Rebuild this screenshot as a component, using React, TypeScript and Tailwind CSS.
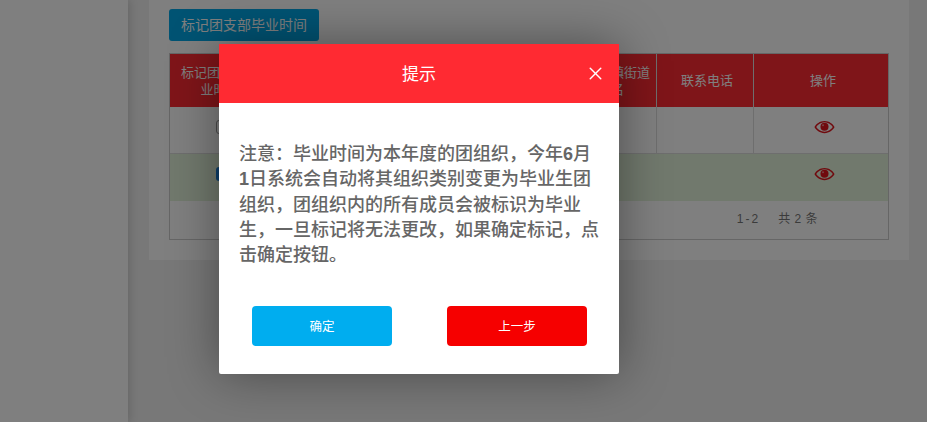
import { X } from 'lucide-react'

const font = { fontFamily: '"Liberation Sans", "Noto Sans CJK SC", sans-serif' }

const EyeIcon = () => (
    <svg viewBox="0 0 24 16" className="h-[14px] w-[21px] text-[#e0141c]">
        <path
            fill="currentColor"
            fillRule="evenodd"
            d="M12 1C6.5 1 2.4 4.4.5 8c1.9 3.6 6 7 11.5 7s9.600-3.400 11.500-7C21.600 4.400 17.500 1 12 1zM12 2.600c-4.300 0-7.700 2.600-9.500 5.400 1.800 2.800 5.200 5.400 9.500 5.400s7.700-2.600 9.500-5.400C19.700 5.200 16.300 2.600 12 2.600z"
        />
        <circle cx="12" cy="7.800" r="4.600" fill="currentColor" />
        <circle cx="10.300" cy="6" r="1.100" fill="#fff" opacity="0.5" />
    </svg>
)

const App = () => {
    return (
        <div style={font} className="relative flex h-[422px] w-[927px] overflow-hidden bg-[#f0f0f0]">
            <aside className="h-full w-[128px] shrink-0 bg-white shadow-[2px_0_8px_rgba(0,0,0,0.15)]" />

            <main className="ml-[21px] h-[260px] w-[760px] bg-white px-5 pt-[9px]">
                <button className="h-8 w-[150px] rounded-[3px] bg-[#00a7e6] text-sm text-white">标记团支部毕业时间</button>

                <div className="mt-3 h-[187px] w-[720px] border border-[#ccc]">
                    <div className="grid h-[53px] grid-cols-[100px_309px_78px_97px_1fr] items-center bg-[#ff2a32] text-center text-[13px] leading-[17px] text-white">
                        <div className="flex h-full items-center justify-center px-2">标记团支部毕业时间</div>
                        <div />
                        <div className="flex h-full items-center justify-center whitespace-nowrap border-r border-[#ddd] text-center">所属镇街道<br />名</div>
                        <div className="flex h-full items-center justify-center border-r border-[#ddd] pl-1">联系电话</div>
                        <div className="pl-1">操作</div>
                    </div>

                    <div className="grid h-[47px] grid-cols-[100px_387px_97px_1fr] items-start border-b border-[#ddd]">
                        <div className="flex justify-center pl-[5px] pt-[13px]">
                            <span className="size-[14px] rounded-[3px] border border-[#999] bg-white" />
                        </div>
                        <div className="h-full border-r border-[#ddd]" />
                        <div className="h-full border-r border-[#ddd]" />
                        <div className="flex justify-center pl-[6px] pt-[13px]"><EyeIcon /></div>
                    </div>

                    <div className="grid h-[47px] grid-cols-[100px_387px_97px_1fr] items-start bg-[#e2f3da]">
                        <div className="flex justify-center pl-[5px] pt-[13px]">
                            <span className="size-[14px] rounded-[3px] bg-[#1b7fd6]" />
                        </div>
                        <div />
                        <div />
                        <div className="flex justify-center pl-[6px] pt-[13px]"><EyeIcon /></div>
                    </div>

                    <div className="flex h-[35px] items-center justify-end pr-[70px] text-xs text-[#777]">
                        <span className="tracking-[2px]">1-2</span>
                        <span className="ml-[18px] tracking-[0.500px]">共 2 条</span>
                    </div>
                </div>
            </main>

            <div className="absolute inset-0 bg-black/50" />

            <div className="absolute left-[219px] top-[44px] h-[330px] w-[400px] rounded-b-[2px] bg-white shadow-[0_0_50px_rgba(0,0,0,0.4)]">
                <div className="relative flex h-[59px] items-center justify-center bg-[#ff2a32] pt-0.5 text-[17px] text-white">
                    提示
                    <X className="absolute right-[13.500px] top-[18.500px] size-[21px]" strokeWidth={1.7} />
                </div>
                <p className="h-[164px] px-5 pt-[39px] text-[18px] font-medium leading-[25.250px] text-[#666]">
                    注意：毕业时间为本年度的团组织，今年<span className="font-bold">6</span>月<span className="font-bold">1</span>日系统会自动将其组织类别变更为毕业生团组织，团组织内的所有成员会被标识为毕业生，一旦标记将无法更改，如果确定标记，点击确定按钮。
                </p>
                <div className="mt-[39px] flex justify-between px-[33px] pr-[32px]">
                    <button className="h-10 w-[140px] rounded-[4px] bg-[#00adef] pt-0.5 text-[12.500px] text-white">确定</button>
                    <button className="h-10 w-[140px] rounded-[4px] bg-[#f60000] pt-0.5 text-[12.500px] text-white">上一步</button>
                </div>
            </div>
        </div>
    )
}

export default App
